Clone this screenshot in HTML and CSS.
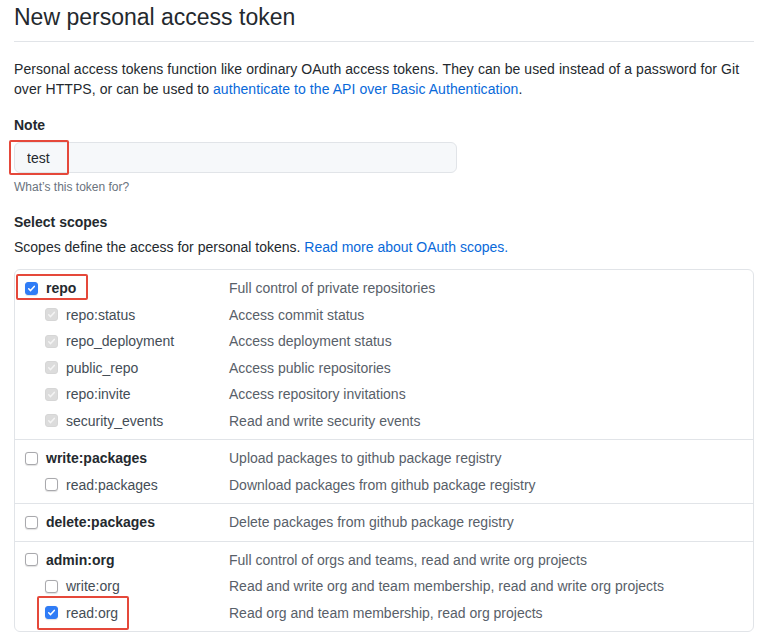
FILE: index.html
```html
<!DOCTYPE html>
<html lang="en">
<head>
<meta charset="utf-8">
<title>New personal access token</title>
<link rel="stylesheet" href="styles.css">
</head>
<body>
<main class="page">
  <h1 class="subhead">New personal access token</h1>
  <p class="intro">Personal access tokens function like ordinary OAuth access tokens. They can be used instead of a password for Git<br>over HTTPS, or can be used to <a href="#">authenticate to the API over Basic Authentication</a>.</p>

  <div class="field">
    <label class="label" for="note">Note</label>
    <div class="input-wrap">
      <input class="input" id="note" type="text" value="test">
      <span class="mark mark-note"></span>
    </div>
    <p class="hint">What’s this token for?</p>
  </div>

  <h2 class="label scopes-title">Select scopes</h2>
  <p class="scopes-intro">Scopes define the access for personal tokens. <a href="#">Read more about OAuth scopes.</a></p>

  <div class="scopes">
    <ul class="group">
      <li class="row">
        <span class="name top"><span class="cb checked"><svg viewBox="0 0 13 13"><path d="M3.2 6.8l2.2 2.2 4.4-5"/></svg></span>repo<span class="mark mark-repo"></span></span>
        <span class="desc">Full control of private repositories</span>
      </li>
      <li class="row">
        <span class="name sub"><span class="cb disabled"><svg viewBox="0 0 13 13"><path d="M3.2 6.8l2.2 2.2 4.4-5"/></svg></span>repo:status</span>
        <span class="desc">Access commit status</span>
      </li>
      <li class="row">
        <span class="name sub"><span class="cb disabled"><svg viewBox="0 0 13 13"><path d="M3.2 6.8l2.2 2.2 4.4-5"/></svg></span>repo_deployment</span>
        <span class="desc">Access deployment status</span>
      </li>
      <li class="row">
        <span class="name sub"><span class="cb disabled"><svg viewBox="0 0 13 13"><path d="M3.2 6.8l2.2 2.2 4.4-5"/></svg></span>public_repo</span>
        <span class="desc">Access public repositories</span>
      </li>
      <li class="row">
        <span class="name sub"><span class="cb disabled"><svg viewBox="0 0 13 13"><path d="M3.2 6.8l2.2 2.2 4.4-5"/></svg></span>repo:invite</span>
        <span class="desc">Access repository invitations</span>
      </li>
      <li class="row">
        <span class="name sub"><span class="cb disabled"><svg viewBox="0 0 13 13"><path d="M3.2 6.8l2.2 2.2 4.4-5"/></svg></span>security_events</span>
        <span class="desc">Read and write security events</span>
      </li>
    </ul>
    <ul class="group">
      <li class="row">
        <span class="name top"><span class="cb"></span>write:packages</span>
        <span class="desc">Upload packages to github package registry</span>
      </li>
      <li class="row">
        <span class="name sub"><span class="cb"></span>read:packages</span>
        <span class="desc">Download packages from github package registry</span>
      </li>
    </ul>
    <ul class="group">
      <li class="row">
        <span class="name top"><span class="cb"></span>delete:packages</span>
        <span class="desc">Delete packages from github package registry</span>
      </li>
    </ul>
    <ul class="group">
      <li class="row">
        <span class="name top"><span class="cb"></span>admin:org</span>
        <span class="desc">Full control of orgs and teams, read and write org projects</span>
      </li>
      <li class="row">
        <span class="name sub"><span class="cb"></span>write:org</span>
        <span class="desc">Read and write org and team membership, read and write org projects</span>
      </li>
      <li class="row">
        <span class="name sub"><span class="cb checked"><svg viewBox="0 0 13 13"><path d="M3.2 6.8l2.2 2.2 4.4-5"/></svg></span>read:org<span class="mark mark-org"></span></span>
        <span class="desc">Read org and team membership, read org projects</span>
      </li>
    </ul>
  </div>
</main>
</body>
</html>
```

FILE: styles.css
```css
* { box-sizing: border-box; }

html, body {
  margin: 0;
  padding: 0;
  background: #ffffff;
}

body {
  font-family: "Liberation Sans", Arial, sans-serif;
  font-size: 14px;
  line-height: 20px;
  color: #24292e;
  overflow: hidden;
}

a { color: #0969da; text-decoration: none; }

.page {
  padding: 0 14px;
}

.subhead {
  margin: 2px 0 0;
  padding-bottom: 9px;
  font-size: 23px;
  line-height: 30px;
  font-weight: 400;
  color: #24292e;
  border-bottom: 1px solid #e1e4e8;
}

.intro {
  margin: 17px 0 0;
  color: #24292e;
  letter-spacing: 0.07px;
}

.field { margin-top: 16px; }

.label {
  display: block;
  margin: 0;
  font-size: 14px;
  line-height: 20px;
  font-weight: 700;
  color: #24292e;
}

.input-wrap {
  position: relative;
  width: 443px;
  margin-top: 7px;
}

.input {
  display: block;
  width: 100%;
  height: 31px;
  padding: 0 12px;
  font: inherit;
  font-size: 14px;
  color: #24292e;
  background: #f6f8fa;
  border: 1px solid #e1e4e8;
  border-radius: 6px;
  outline: none;
}

.hint {
  margin: 6px 0 0;
  font-size: 12px;
  line-height: 16px;
  color: #6a737d;
}

.scopes-title { margin-top: 17px; }

.scopes-intro {
  margin: 5px 0 0;
  color: #24292e;
}

.scopes {
  margin-top: 12px;
  border: 1px solid #e1e4e8;
  border-radius: 6px;
}

.group {
  list-style: none;
  margin: 0;
  padding: 5px 0;
  border-top: 1px solid #e1e4e8;
}

.group:first-child { border-top: 0; }

.row {
  display: grid;
  grid-template-columns: 214px 1fr;
  align-items: center;
  height: 26.5px;
}

.name {
  position: relative;
  display: flex;
  align-items: center;
  gap: 8px;
  color: #444d56;
}

.name.top {
  padding-left: 10px;
  font-weight: 700;
  color: #24292e;
}

.name.sub { padding-left: 30px; }

.desc { color: #586069; }

.cb {
  flex: none;
  display: inline-flex;
  align-items: center;
  justify-content: center;
  width: 13px;
  height: 13px;
  border: 1px solid #a9a9ad;
  border-radius: 3px;
  background: #ffffff;
  box-shadow: 0 0.5px 1px rgba(0, 0, 0, 0.12);
}

.cb svg {
  width: 13px;
  height: 13px;
  fill: none;
  stroke-width: 1.8;
  stroke-linecap: round;
  stroke-linejoin: round;
}

.cb.checked {
  background: #2f7cf6;
  border-color: #2f7cf6;
}

.cb.checked svg { stroke: #ffffff; }

.cb.disabled {
  background: #dcdcdc;
  border-color: #d6d6d6;
  box-shadow: none;
}

.cb.disabled svg { stroke: #f4f4f4; }

.mark {
  position: absolute;
  border: 2px solid #e5483a;
  border-radius: 2px;
  pointer-events: none;
}

.mark-note {
  left: -5px;
  top: -2px;
  width: 60px;
  height: 35px;
}

.mark-repo {
  left: 1px;
  top: -4px;
  width: 72px;
  height: 26px;
}

.mark-org {
  left: 22px;
  top: -7px;
  width: 92px;
  height: 34px;
}
```
